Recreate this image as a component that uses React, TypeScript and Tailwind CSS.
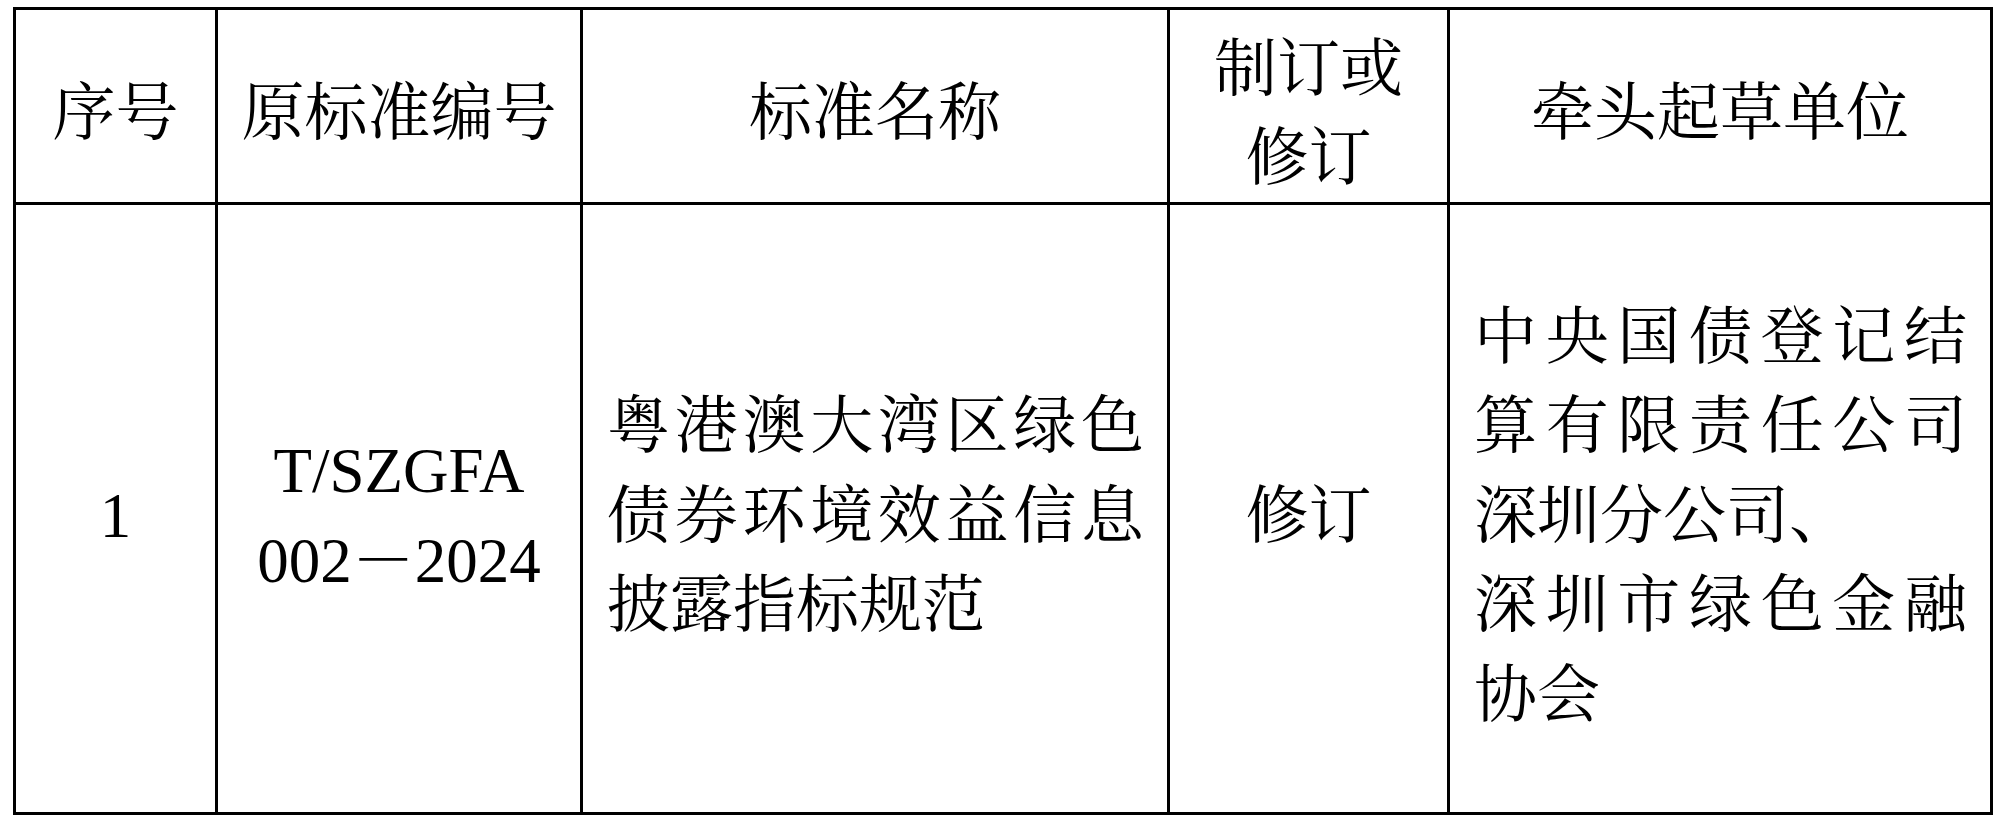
export default function App() {
  const cell = "bg-white flex flex-col items-center justify-center text-center pt-[16px]";
  const left = "bg-white flex flex-col justify-center pl-[24px] pr-[23px] pt-[16px]";
  const just = "text-justify [text-align-last:justify] whitespace-nowrap";
  return (
    <div className="min-h-screen bg-white pl-[13px] pt-[7px] text-black font-['Liberation_Serif','Noto_Serif_CJK_SC','Noto_Sans_CJK_SC',serif]">
      <div className="grid w-[1980px] grid-cols-[199px_362px_584px_277px_540px] grid-rows-[192px_607px] gap-[3px] border-[3px] border-black bg-black text-[63px] leading-[89.5px]">
        <div className={cell}>序号</div>
        <div className={cell}>原标准编号</div>
        <div className={cell}>标准名称</div>
        <div className={cell}>
          <div>制订或</div>
          <div>修订</div>
        </div>
        <div className={cell}>牵头起草单位</div>

        <div className={cell}>1</div>
        <div className={cell}>
          <div>T/SZGFA</div>
          <div>002－2024</div>
        </div>
        <div className={left}>
          <div className={just}>粤港澳大湾区绿色</div>
          <div className={just}>债券环境效益信息</div>
          <div>披露指标规范</div>
        </div>
        <div className={cell}>修订</div>
        <div className={left}>
          <div className={just}>中央国债登记结</div>
          <div className={just}>算有限责任公司</div>
          <div>深圳分公司、</div>
          <div className={just}>深圳市绿色金融</div>
          <div>协会</div>
        </div>
      </div>
    </div>
  );
}
